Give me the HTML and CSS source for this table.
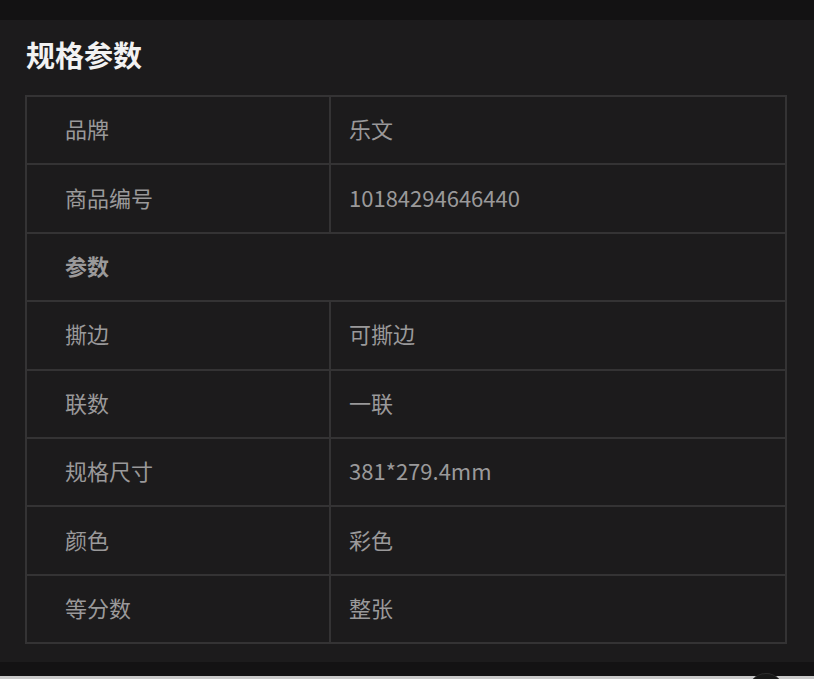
FILE: index.html
```html
<!DOCTYPE html>
<html lang="zh-CN">

<head>
    <meta charset="UTF-8" />
    <meta name="viewport" content="width=device-width, initial-scale=1.0" />
    <title>规格参数</title>
    <link rel="stylesheet" href="styles.css">
</head>

<body>
    <div class="top-bar"></div>

    <section class="spec-card">
        <h2>规格参数</h2>
        <table class="spec-table">
            <tr>
                <td class="label">品牌</td>
                <td>乐文</td>
            </tr>
            <tr>
                <td class="label">商品编号</td>
                <td>10184294646440</td>
            </tr>
            <tr>
                <td class="group" colspan="2">参数</td>
            </tr>
            <tr>
                <td class="label">撕边</td>
                <td>可撕边</td>
            </tr>
            <tr>
                <td class="label">联数</td>
                <td>一联</td>
            </tr>
            <tr>
                <td class="label">规格尺寸</td>
                <td>381*279.4mm</td>
            </tr>
            <tr>
                <td class="label">颜色</td>
                <td>彩色</td>
            </tr>
            <tr>
                <td class="label">等分数</td>
                <td>整张</td>
            </tr>
        </table>
    </section>

    <div class="bottom-bar">
        <div class="float-btn"></div>
    </div>
</body>

</html>
```

FILE: styles.css
```css
html, body {
    height: 100%;
}

body {
    margin: 0;
    background-color: #131213;
    font-family: "Noto Sans CJK SC", "Noto Sans", sans-serif;
    overflow: hidden;
    display: flex;
    flex-direction: column;
}

.top-bar {
    height: 20px;
    flex-shrink: 0;
    background-color: #131213;
}

.spec-card {
    flex-shrink: 0;
    background-color: #1c1b1c;
    padding: 13px 27px 18px 25px;
}

.spec-card h2 {
    margin: 0 0 20px 1px;
    font-size: 29px;
    line-height: 42px;
    font-weight: bold;
    color: #f2f2f2;
}

.spec-table {
    width: 100%;
    border-collapse: collapse;
    border: 2px solid #343334;
    table-layout: fixed;
}

.spec-table td {
    border: 2px solid #343334;
    height: 62.4px;
    padding: 0 0 4px 18px;
    font-size: 22px;
    color: #9a999a;
    vertical-align: middle;
}

.spec-table td.label,
.spec-table td.group {
    padding-left: 38px;
}

.spec-table td.label {
    width: 264px;
}

.spec-table td.group {
    font-weight: bold;
}

.bottom-bar {
    position: relative;
    flex: 1;
    background-color: #131213;
    border-bottom: 3px solid #c9c9c9;
}

.float-btn {
    position: absolute;
    left: 748px;
    top: 11px;
    width: 36px;
    height: 36px;
    border-radius: 50%;
    background-color: #181818;
    border-top: 1px solid #2e2e2e;
}
```
